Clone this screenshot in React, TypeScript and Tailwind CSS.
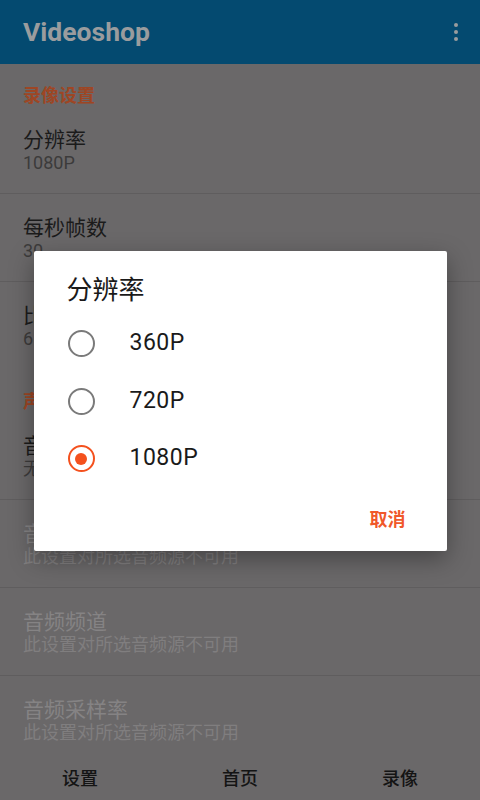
const font = "font-['Roboto','Noto_Sans_CJK_SC',sans-serif]";

type Pref = {
  title: string;
  summary: string;
  disabled?: boolean;
  divider?: boolean;
};

const videoPrefs: Pref[] = [
  { title: "分辨率", summary: "1080P", divider: true },
  { title: "每秒帧数", summary: "30", divider: true },
  { title: "比特率", summary: "6 Mbps" },
];

const audioPrefs: Pref[] = [
  { title: "音频源", summary: "无", divider: true },
  { title: "音频编码器", summary: "此设置对所选音频源不可用", disabled: true, divider: true },
  { title: "音频频道", summary: "此设置对所选音频源不可用", disabled: true, divider: true },
  { title: "音频采样率", summary: "此设置对所选音频源不可用", disabled: true },
];

const SectionHeader = ({ label }: { label: string }) => (
  <div className="h-[42px] shrink-0 px-[23px] pt-[20px]">
    <p className="text-[18px] font-bold leading-[24px] text-[#9e4624]">{label}</p>
  </div>
);

const PrefRow = ({ pref }: { pref: Pref }) => (
  <div
    className={`h-[88px] shrink-0 px-[23px] pt-[22px] ${
      pref.divider ? "border-b border-[#5f5d5e]" : ""
    }`}
  >
    <p
      className={`text-[21px] leading-[24px] ${
        pref.disabled ? "text-[#858384]" : "text-[#1b1b1b]"
      }`}
    >
      {pref.title}
    </p>
    <p
      className={`text-[18px] leading-[22px] ${
        pref.disabled ? "text-[#807e7f]" : "text-[#3c3b3b]"
      }`}
    >
      {pref.summary}
    </p>
  </div>
);

const Radio = ({ checked }: { checked: boolean }) =>
  checked ? (
    <span className="flex h-[27px] w-[27px] items-center justify-center rounded-full border-[2.5px] border-[#f4511e]">
      <span className="h-[12px] w-[12px] rounded-full bg-[#f4511e]" />
    </span>
  ) : (
    <span className="h-[27px] w-[27px] rounded-full border-[2.5px] border-[#7a7a7a]" />
  );

const options = ["360P", "720P", "1080P"];

const ResolutionDialog = ({ selected }: { selected: string }) => (
  <div className="absolute inset-0 flex items-center justify-center">
    <div className="mt-[2px] flex w-[413px] flex-col rounded-[2px] bg-white pt-[23px] shadow-[0_8px_24px_rgba(0,0,0,0.35)]">
      <p className="pl-[33px] text-[26px] leading-[32px] text-[#1a1a1a]">分辨率</p>
      <div className="mt-[9px] flex flex-col">
        {options.map((opt) => (
          <div key={opt} className="flex h-[57.5px] items-center pl-[34px]">
            <Radio checked={opt === selected} />
            <span className="ml-[35px] text-[23px] tracking-[0.5px] text-[#1a1a1a]">{opt}</span>
          </div>
        ))}
      </div>
      <div className="flex h-[64px] items-center justify-end pr-[41px]">
        <span className="text-[18px] font-semibold text-[#f0582a]">取消</span>
      </div>
    </div>
  </div>
);

export default function App() {
  return (
    <div className={`relative flex h-[800px] w-[480px] flex-col overflow-hidden bg-[#6a6869] ${font}`}>
      <header className="flex h-16 shrink-0 items-center justify-between bg-[#044a70] pl-[23px] pr-[22px]">
        <h1 className="text-[26.5px] font-bold text-[#9a9c9e]">Videoshop</h1>
        <div className="flex flex-col gap-[3px]">
          <span className="h-[4px] w-[4px] rounded-full bg-[#9a9c9e]" />
          <span className="h-[4px] w-[4px] rounded-full bg-[#9a9c9e]" />
          <span className="h-[4px] w-[4px] rounded-full bg-[#9a9c9e]" />
        </div>
      </header>

      <div className="flex min-h-0 flex-1 flex-col overflow-hidden">
        <SectionHeader label="录像设置" />
        {videoPrefs.map((p) => (
          <PrefRow key={p.title} pref={p} />
        ))}
        <SectionHeader label="声音设置" />
        {audioPrefs.map((p) => (
          <PrefRow key={p.title} pref={p} />
        ))}
      </div>

      <nav className="grid h-[44px] shrink-0 grid-cols-3 items-center text-center text-[18px] font-medium text-[#141414]">
        <span>设置</span>
        <span>首页</span>
        <span>录像</span>
      </nav>

      <ResolutionDialog selected="1080P" />
    </div>
  );
}
